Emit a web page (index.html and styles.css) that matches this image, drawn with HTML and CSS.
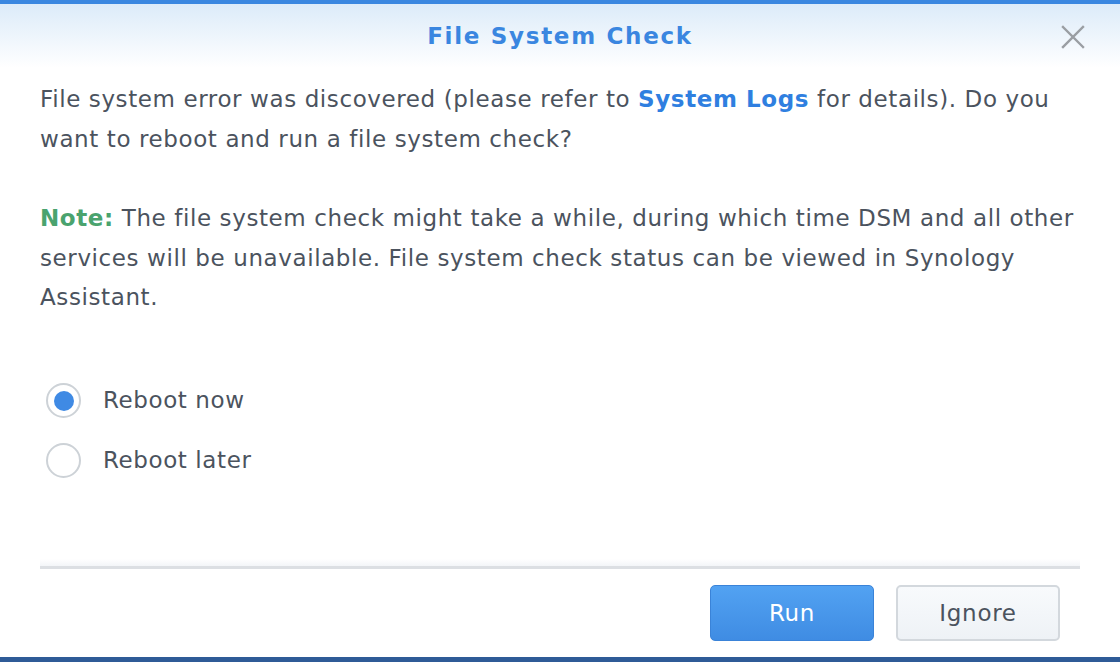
FILE: index.html
```html
<!DOCTYPE html>
<html lang="en">
<head>
<meta charset="UTF-8">
<title>File System Check</title>
<link rel="stylesheet" href="styles.css">
</head>
<body>
<div class="dialog">
    <div class="header">
        <h1 class="title">File System Check</h1>
        <button class="close" aria-label="Close">
            <svg width="26" height="26" viewBox="0 0 26 26"><path d="M3 3 L23 23 M23 3 L3 23" stroke="#9a9ea3" stroke-width="2.4" stroke-linecap="square"/></svg>
        </button>
    </div>

    <div class="content">
        <p>File system error was discovered (please refer to <a href="#" class="link">System Logs</a> for details). Do you want to reboot and run a file system check?</p>
        <p><span class="note">Note:</span> The file system check might take a while, during which time DSM and all other services will be unavailable. File system check status can be viewed in Synology Assistant.</p>

        <div class="options">
            <label class="option"><span class="radio checked"></span>Reboot now</label>
            <label class="option"><span class="radio"></span>Reboot later</label>
        </div>
    </div>

    <div class="footer">
        <button class="btn btn-run">Run</button>
        <button class="btn btn-ignore">Ignore</button>
    </div>
</div>
</body>
</html>
```

FILE: styles.css
```css
html, body {
    margin: 0;
    padding: 0;
    background: #fff;
}

body {
    font-family: "DejaVu Sans", Verdana, sans-serif;
    color: #4b535e;
    border-top: 4px solid #3a87e0;
    border-bottom: 5px solid #2f5b97;
    height: 653px;
    box-sizing: content-box;
    overflow: hidden;
}

.dialog {
    height: 653px;
    display: flex;
    flex-direction: column;
}

/* cabecera con degradado */
.header {
    height: 64px;
    display: flex;
    align-items: center;
    justify-content: center;
    position: relative;
    background: linear-gradient(#dcebf9, #ffffff);
}

.title {
    margin: 0;
    font-size: 23px;
    font-weight: bold;
    color: #3a86e0;
    letter-spacing: 1.7px;
}

.close {
    position: absolute;
    right: 34px;
    top: 20px;
    background: none;
    border: none;
    padding: 0;
    cursor: pointer;
}

.content {
    flex: 1;
    padding: 12px 40px 0 40px;
    font-size: 23px;
    letter-spacing: 0.6px;
    line-height: 39.5px;
}

.content p {
    margin: 0 0 40px 0;
}

.link {
    color: #2f7fe0;
    font-weight: bold;
    text-decoration: none;
}

.note {
    color: #4aa36e;
    font-weight: bold;
}

.options {
    margin-top: 65px;
    display: flex;
    flex-direction: column;
    gap: 24px;
}

.option {
    display: flex;
    align-items: center;
    gap: 22px;
    padding-left: 6px;
    height: 36px;
}

.radio {
    width: 35px;
    height: 35px;
    border: 2px solid #cdd2d7;
    border-radius: 50%;
    box-sizing: border-box;
    display: flex;
    align-items: center;
    justify-content: center;
    background: #fff;
}

.radio.checked::after {
    content: "";
    width: 20px;
    height: 20px;
    border-radius: 50%;
    background: #3f8ae4;
}

.footer {
    margin: 0 40px;
    border-top: 3px solid #dcdfe3;
    padding: 16px 20px 16px 0;
    display: flex;
    justify-content: flex-end;
    gap: 22px;
    position: relative;
}

.footer::before {
    content: "";
    position: absolute;
    left: 0;
    right: 0;
    top: -10px;
    height: 7px;
    background: linear-gradient(#ffffff, #f3f5f8);
}

.btn {
    width: 164px;
    height: 56px;
    border-radius: 5px;
    font-family: "DejaVu Sans", Verdana, sans-serif;
    font-size: 23px;
    letter-spacing: 0.7px;
    cursor: pointer;
}

.btn-run {
    background: linear-gradient(#52a2f2, #3f8ce3);
    border: 1px solid #3a83d8;
    color: #fff;
}

.btn-ignore {
    background: linear-gradient(#f8fafc, #eef2f6);
    border: 2px solid #d3d8dd;
    color: #4b535e;
}
```
